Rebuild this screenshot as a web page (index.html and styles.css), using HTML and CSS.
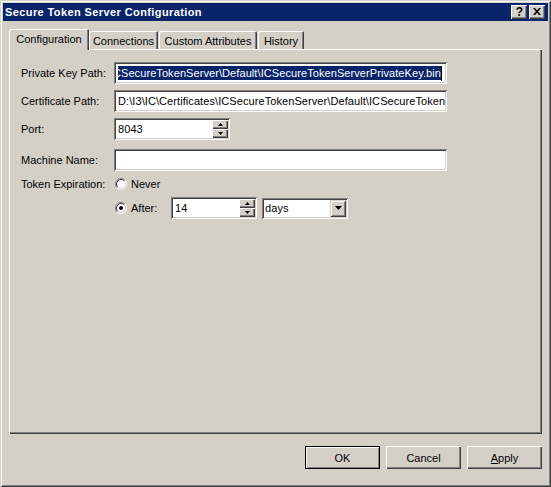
FILE: index.html
```html
<!DOCTYPE html>
<html>
<head>
<meta charset="utf-8">
<title>Secure Token Server Configuration</title>
<link rel="stylesheet" href="styles.css">
</head>
<body>
<div class="window">
  <div class="titlebar">
    <span class="title">Secure Token Server Configuration</span>
    <div class="tbtns">
      <div class="tbtn help">?</div>
      <div class="tbtn close"><svg width="8" height="7" viewBox="0 0 8 7"><path d="M0 0H2L4 2.2L6 0H8L5.1 3.5L8 7H6L4 4.8L2 7H0L2.9 3.5Z" fill="#000"/></svg></div>
    </div>
  </div>
  <div class="tabs">
    <div class="tab active t1">Configuration</div>
    <div class="tab t2">Connections</div>
    <div class="tab t3">Custom Attributes</div>
    <div class="tab t4">History</div>
  </div>
  <div class="panel">
    <div class="row r1">
      <span class="lbl">Private Key Path:</span>
      <div class="edit wide"><div class="clip endclip"><span class="seltext">D:\I3\IC\Certificates\ICSecureTokenServer\Default\ICSecureTokenServerPrivateKey.bin</span><span class="caret"></span></div></div>
    </div>
    <div class="row r2">
      <span class="lbl">Certificate Path:</span>
      <div class="edit wide"><div class="clip">D:\I3\IC\Certificates\ICSecureTokenServer\Default\ICSecureTokenServerCertificate.bin</div></div>
    </div>
    <div class="row r3">
      <span class="lbl">Port:</span>
      <div class="edit port"><div class="clip">8043</div>
        <div class="spin"><div class="sbtn"><svg width="5" height="3" viewBox="0 0 5 3"><path d="M2.5 0L5 3H0Z" fill="#000"/></svg></div><div class="sbtn"><svg width="5" height="3" viewBox="0 0 5 3"><path d="M0 0H5L2.5 3Z" fill="#000"/></svg></div></div>
      </div>
    </div>
    <div class="row r4">
      <span class="lbl">Machine Name:</span>
      <div class="edit wide"><div class="clip"></div></div>
    </div>
    <div class="row r5">
      <span class="lbl">Token Expiration:</span>
      <span class="radio"><svg width="12" height="12" viewBox="0 0 12 12"><circle cx="6" cy="6" r="4.5" fill="#fff"/><path d="M2.11 9.89A5.5 5.5 0 0 1 9.89 2.11" fill="none" stroke="#808080"/><path d="M9.89 2.11A5.5 5.5 0 0 1 2.11 9.89" fill="none" stroke="#fff"/><path d="M2.82 9.18A4.5 4.5 0 0 1 9.18 2.82" fill="none" stroke="#404040"/><path d="M9.18 2.82A4.5 4.5 0 0 1 2.82 9.18" fill="none" stroke="#d4d0c8"/></svg></span>
      <span class="rlbl">Never</span>
    </div>
    <div class="row r6">
      <span class="lbl"></span>
      <div class="rgroup">
        <span class="radio"><svg width="12" height="12" viewBox="0 0 12 12"><circle cx="6" cy="6" r="4.5" fill="#fff"/><path d="M2.11 9.89A5.5 5.5 0 0 1 9.89 2.11" fill="none" stroke="#808080"/><path d="M9.89 2.11A5.5 5.5 0 0 1 2.11 9.89" fill="none" stroke="#fff"/><path d="M2.82 9.18A4.5 4.5 0 0 1 9.18 2.82" fill="none" stroke="#404040"/><path d="M9.18 2.82A4.5 4.5 0 0 1 2.82 9.18" fill="none" stroke="#d4d0c8"/><circle cx="6" cy="6" r="2" fill="#000"/></svg></span>
        <span class="rlbl">After:</span>
      </div>
      <div class="edit num"><div class="clip">14</div>
        <div class="spin"><div class="sbtn"><svg width="5" height="3" viewBox="0 0 5 3"><path d="M2.5 0L5 3H0Z" fill="#000"/></svg></div><div class="sbtn"><svg width="5" height="3" viewBox="0 0 5 3"><path d="M0 0H5L2.5 3Z" fill="#000"/></svg></div></div>
      </div>
      <div class="edit combo"><div class="clip">days</div>
        <div class="dbtn"><svg width="7" height="4" viewBox="0 0 7 4"><path d="M0 0H7L3.5 4Z" fill="#000"/></svg></div>
      </div>
    </div>
  </div>
  <div class="buttons">
    <div class="btn default">OK</div>
    <div class="btn">Cancel</div>
    <div class="btn"><span><u>A</u>pply</span></div>
  </div>
</div>
</body>
</html>
```
FILE: styles.css
```css
* { box-sizing: border-box; }
html, body { margin: 0; padding: 0; }
body {
  width: 551px;
  height: 487px;
  overflow: hidden;
  background: #d4d0c8;
  font-family: "Liberation Sans", Arial, sans-serif;
  font-size: 11px;
  color: #000;
}
.window {
  width: 551px;
  height: 487px;
  padding: 3px;
  background: #d4d0c8;
  box-shadow: inset 1px 1px #d4d0c8, inset -1px -1px #404040, inset 2px 2px #fff, inset -2px -2px #808080;
}
.titlebar {
  height: 18px;
  background: #0a246a;
  display: flex;
  align-items: center;
  justify-content: space-between;
  padding: 0 3px 0 2px;
}
.title {
  color: #fff;
  font-weight: bold;
  font-size: 11px;
  letter-spacing: 0.4px;
}
.tbtns { display: flex; gap: 2px; }
.tbtn {
  width: 16px;
  height: 14px;
  background: #d4d0c8;
  box-shadow: inset 1px 1px #fff, inset -1px -1px #404040, inset -2px -2px #808080;
  display: flex;
  align-items: center;
  justify-content: center;
}
.help { font-weight: bold; font-size: 12px; line-height: 14px; padding-left: 1px; }
.close svg { display: block; margin-left: -1px; margin-top: -1px; }

.tabs {
  margin-top: 8px;
  height: 20px;
  display: flex;
  align-items: flex-end;
  padding-left: 6px;
}
.tab {
  height: 18px;
  background: #d4d0c8;
  box-shadow: inset 1px 1px #fff, inset -1px 0 #404040, inset -2px 0 #808080;
  border-radius: 2px 2px 0 0;
  text-align: center;
  line-height: 18px;
  padding-top: 1px;
}
.tab.active {
  height: 21px;
  margin-bottom: -1px;
  position: relative;
  z-index: 1;
  line-height: 19px;
  padding-top: 1px;
}
.t1 { width: 80px; }
.t2 { width: 69px; }
.t3 { width: 98px; margin-left: 1px; }
.t4 { width: 46px; margin-left: 1px; }

.panel {
  width: 533px;
  height: 385px;
  margin-left: 6px;
  box-shadow: inset 1px 1px #fff, inset -1px -1px #404040, inset -2px -2px #808080;
  padding: 13px 0 0 12px;
}
.row {
  display: flex;
  align-items: center;
}
.r1, .r2, .r3, .r4 { height: 22px; margin-bottom: 6px; }
.r3 { margin-bottom: 9px; }
.r4 { margin-bottom: 6px; }
.r5 { height: 14px; margin-bottom: 6px; }
.r6 { height: 22px; }
.lbl { width: 93px; flex: none; }

.edit {
  height: 22px;
  background: #fff;
  box-shadow: inset 1px 1px #808080, inset -1px -1px #fff, inset 2px 2px #404040, inset -2px -2px #d4d0c8;
  display: flex;
  align-items: center;
  padding: 2px 2px 2px 4px;
  letter-spacing: 0.08px;
}
.clip {
  flex: 1;
  overflow: hidden;
  white-space: nowrap;
  display: flex;
  align-items: center;
  height: 100%;
  min-width: 0;
}
.endclip { justify-content: flex-end; padding-right: 3px; }
.seltext {
  background: #0a246a;
  color: #fff;
  line-height: 14px;
  flex: none;
}
.caret {
  flex: none;
  width: 1px;
  height: 15px;
  background: #000;
}
.wide { width: 333px; }
.port { width: 116px; padding-right: 2px; }
.num { width: 86px; }
.combo { width: 86px; height: 21px; margin-left: 5px; padding-left: 3px; }

.spin {
  flex: none;
  width: 16px;
  height: 18px;
  display: flex;
  flex-direction: column;
}
.sbtn {
  flex: 1;
  background: #d4d0c8;
  box-shadow: inset 1px 1px #fff, inset -1px -1px #404040, inset -2px -2px #808080;
  display: flex;
  align-items: center;
  justify-content: center;
}
.sbtn svg { display: block; }
.dbtn {
  flex: none;
  width: 16px;
  height: 17px;
  background: #d4d0c8;
  box-shadow: inset 1px 1px #d4d0c8, inset -1px -1px #404040, inset 2px 2px #fff, inset -2px -2px #808080;
  display: flex;
  align-items: center;
  justify-content: center;
}
.dbtn svg { display: block; }

.radio { width: 12px; height: 12px; margin-left: 1px; flex: none; }
.radio svg { display: block; }
.rlbl { margin-left: 4px; }
.rgroup { width: 57px; flex: none; display: flex; align-items: center; }

.buttons {
  margin-top: 12px;
  height: 23px;
  display: flex;
  justify-content: flex-end;
  gap: 6px;
  padding-right: 6px;
}
.btn {
  width: 75px;
  height: 23px;
  background: #d4d0c8;
  box-shadow: inset 1px 1px #fff, inset -1px -1px #404040, inset -2px -2px #808080;
  display: flex;
  align-items: center;
  justify-content: center;
}
.btn.default {
  box-shadow: inset 0 0 0 1px #000, inset 2px 2px #fff, inset -2px -2px #808080;
}
```
